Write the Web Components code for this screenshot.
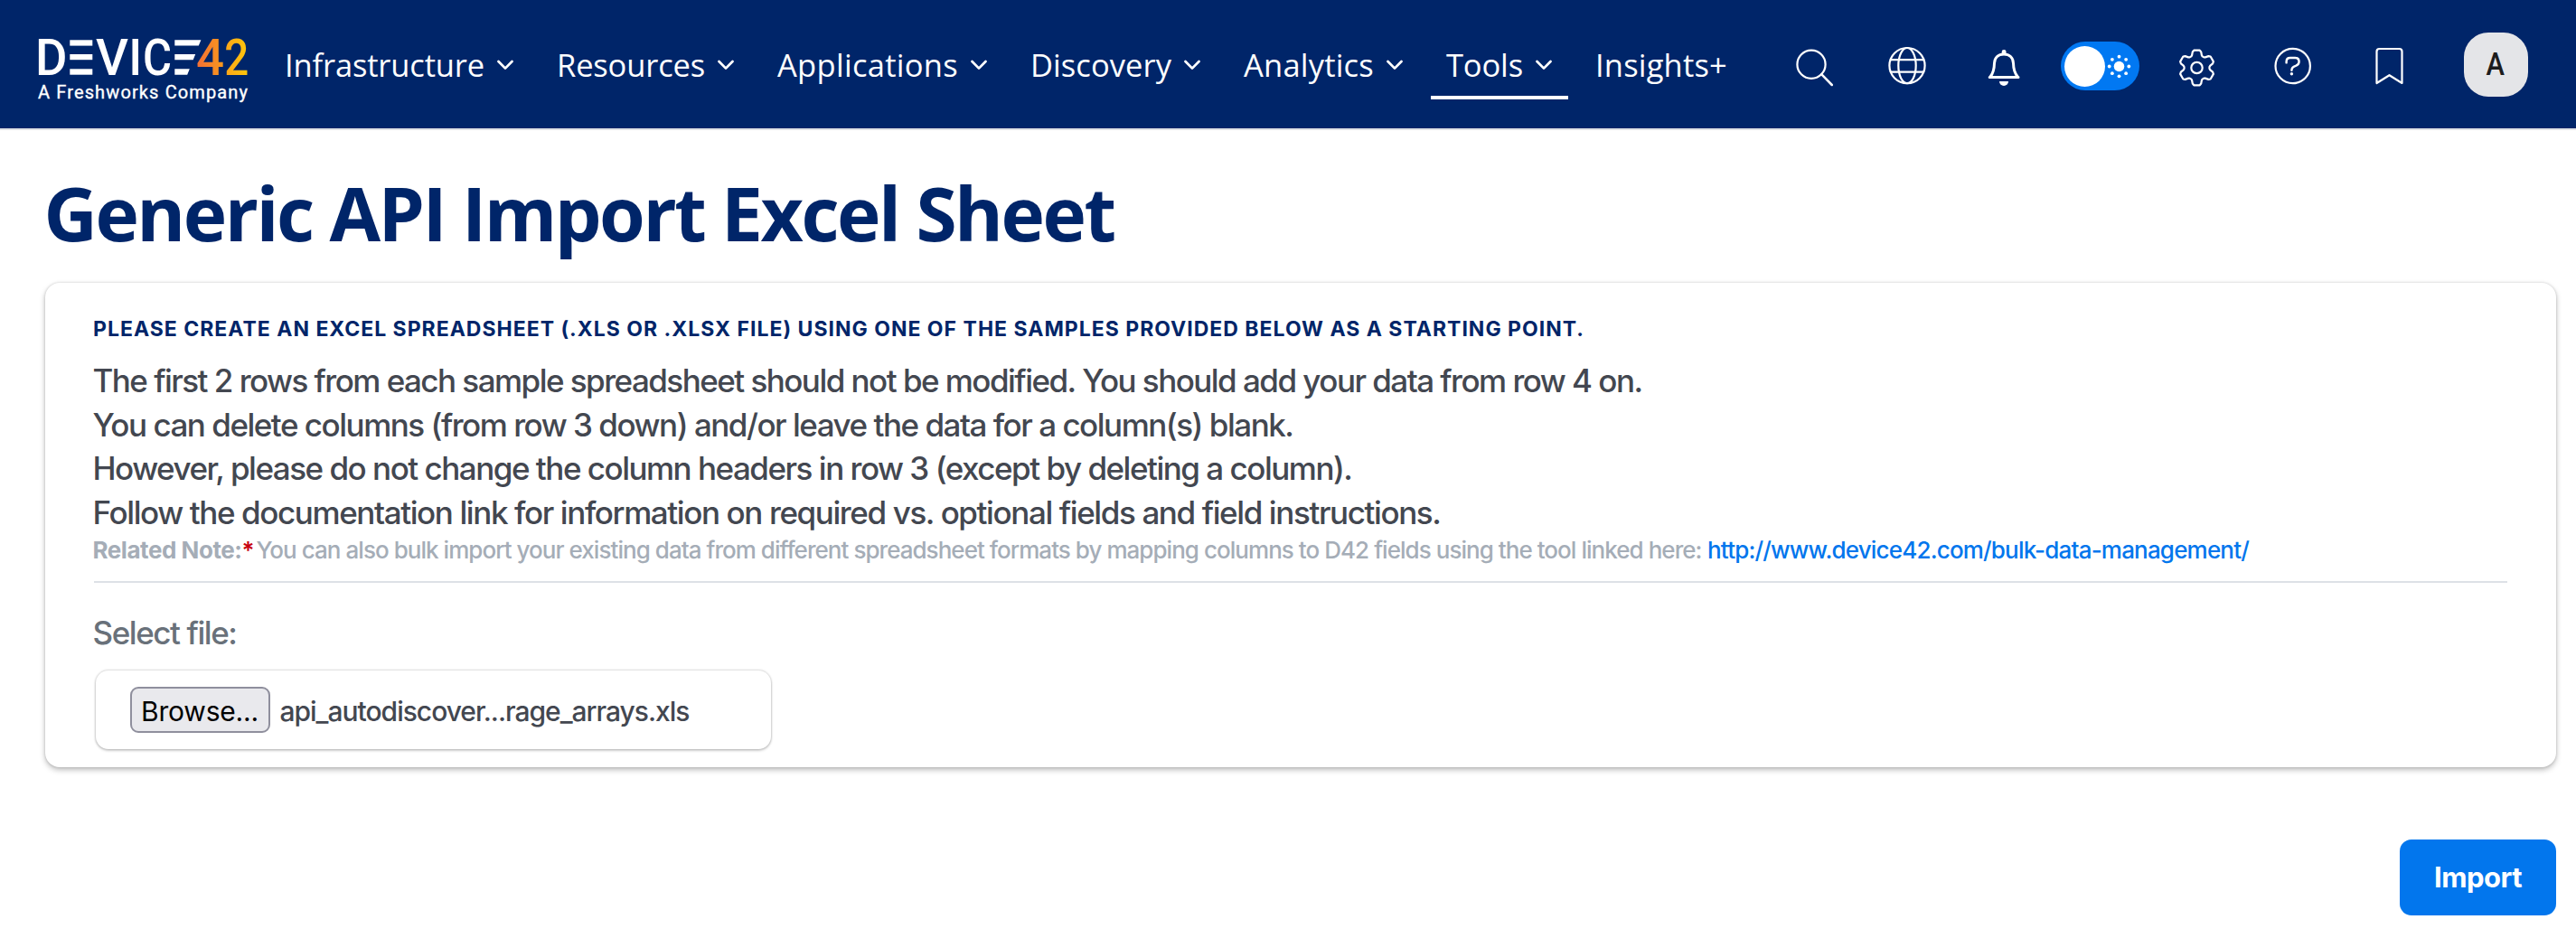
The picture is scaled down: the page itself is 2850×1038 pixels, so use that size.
<!DOCTYPE html>
<html lang="en">
<head>
<meta charset="utf-8">
<title>Generic API Import Excel Sheet</title>
<style>
  body { margin: 0; background: #fff; font-family: Inter, "Liberation Sans", sans-serif; }
</style>
</head>
<body>
<d42-page></d42-page>
<script>
const define = (name, html, setup) => customElements.define(name, class extends HTMLElement {
  connectedCallback() {
    if (this.shadowRoot) return;
    const root = this.attachShadow({ mode: 'open' });
    const t = document.createElement('template');
    t.innerHTML = html;
    root.append(t.content.cloneNode(true));
    if (setup) setup(this, root);
  }
});

/* One line of text, tracked to an exact measure given by w. */
define('fit-text', `<style>
  :host { display: block; white-space: pre; }
  span { display: inline-block; }
</style><span><slot></slot></span>`, (el, root) => {
  const w = parseFloat(el.getAttribute('w'));
  const span = root.querySelector('span');
  el.style.width = w + 'px';
  const natural = span.getBoundingClientRect().width;
  span.style.letterSpacing = ((w - natural) / el.textContent.length) + 'px';
});

define('d42-logo', `<style>
  :host { display: block; width: 234px; height: 80px; }
  svg { display: block; overflow: visible; }
  text { font-family: Roboto, sans-serif; font-weight: 500; }
  .sub { font-weight: 400; stroke: #fff; stroke-width: .35px; }
</style>
<svg width="234" height="80" viewBox="41 40 234 80">
  <defs>
    <linearGradient id="g4" gradientUnits="userSpaceOnUse" x1="218" y1="0" x2="248" y2="0"><stop offset="0" stop-color="#f36f35"/><stop offset="1" stop-color="#f99a1c"/></linearGradient>
    <linearGradient id="g2" gradientUnits="userSpaceOnUse" x1="248" y1="0" x2="274" y2="0"><stop offset="0" stop-color="#fba31a"/><stop offset="1" stop-color="#ffc60b"/></linearGradient>
  </defs>
  <g fill="#fff" font-size="55">
    <text x="39" y="83" textLength="35.5" lengthAdjust="spacingAndGlyphs">D</text>
    <text x="75.5" y="83" textLength="27" lengthAdjust="spacingAndGlyphs">E</text>
    <text x="106" y="83" textLength="36" lengthAdjust="spacingAndGlyphs">V</text>
    <text x="142.3" y="83" textLength="15" lengthAdjust="spacingAndGlyphs">I</text>
    <text x="158" y="83" textLength="32" lengthAdjust="spacingAndGlyphs">C</text>
    <text x="191.5" y="83" textLength="18" lengthAdjust="spacingAndGlyphs">E</text>
    <text x="217" y="83" textLength="31" lengthAdjust="spacingAndGlyphs" fill="url(#g4)">4</text>
    <text x="248.2" y="83" textLength="27" lengthAdjust="spacingAndGlyphs" fill="url(#g2)">2</text>
  </g>
  <g fill="#002569"><rect x="76" y="43" width="26.8" height="41"/><rect x="192" y="43" width="18" height="41"/></g>
  <g fill="#fff">
    <rect x="77.3" y="44.3" width="25" height="6.3"/><rect x="77.3" y="60" width="25" height="6.2"/><rect x="77.3" y="76.3" width="25" height="6.4"/>
    <path d="M193.3 44.3H222.4L219.8 50.6H193.3ZM193.3 60H216.2L213.7 66.2H193.3ZM193.3 76.3H209.8L207.2 82.7H193.3Z"/>
  </g>
  <text class="sub" x="42" y="109" font-size="20" fill="#fff" textLength="232">A Freshworks Company</text>
</svg>`);

define('nav-item', `<style>
  :host { display: flex; align-items: center; height: 78px; box-sizing: border-box; padding: 6px 18px 0 17px; gap: 14px; border-bottom: 4px solid transparent; }
  :host([active]) { border-color: #fff; }
  :host([plain]) svg { display: none; }
  svg { display: block; }
</style><slot></slot>
<svg width="18" height="12" viewBox="0 0 18 12" fill="none" stroke="#fff" stroke-width="2.7" stroke-linecap="round" stroke-linejoin="round"><path d="M1.5 2L9 9.6L16.5 2"/></svg>`);

const gear = (() => {
  let d = '';
  for (let k = 0; k < 6; k++)
    [[-26, 14], [-21, 15], [-15, 18.2], [-9.5, 19.6], [9.5, 19.6], [15, 18.2], [21, 15], [26, 14]].forEach(([a, r]) => {
      const t = (k * 60 + a) * Math.PI / 180;
      d += (d ? 'L' : 'M') + (23.5 + r * Math.sin(t)).toFixed(2) + ' ' + (28 - r * Math.cos(t)).toFixed(2);
    });
  return d + 'Z';
})();
const icons = {
  search: '<circle cx="20" cy="24.3" r="15.6"/><path d="M31.2 35.2L42.8 47" stroke-width="2.5"/>',
  globe: '<circle cx="24" cy="25.6" r="19.6"/><ellipse cx="24" cy="25.6" rx="9.7" ry="19.6"/><path d="M5.8 19.2H42.2M5.8 32.6H42.2"/>',
  bell: '<g stroke-width="3"><path d="M8.2 38.6H40M9 38C12.5 33.5 13.4 29 13.5 23C13.7 16.5 18 13 24 13S34.3 16.5 34.5 23C34.6 29 35.5 33.5 39.3 38"/></g><path d="M22.8 12V10.3a1.3 1.3 0 0 1 2.6 0V12Z" fill="#fff"/><path d="M19 43H29A5 5 0 0 1 19 43Z" fill="#fff" stroke="none"/>',
  gear: `<path d="${gear}"/><circle cx="23.5" cy="28" r="6.2"/>`,
  help: '<circle cx="23.7" cy="26" r="19.2"/><path d="M16.6 22.4V21.2Q16.6 17 20.8 17H26.4Q30.6 17 30.6 21.2Q30.6 24.4 26.8 25.8Q22.4 27.2 22.4 30.8" stroke-width="2.4"/><circle cx="22.4" cy="34.8" r="1.7" fill="#fff" stroke="none"/>',
  bookmark: '<path d="M9.5 45V10Q9.5 7 12.5 7H34.5Q37.5 7 37.5 10V45L23.5 36.2Z"/>'
};
define('top-icon', `<style>
  :host { display: block; width: 48px; height: 48px; flex: none; }
  svg { display: block; overflow: visible; }
</style><svg width="48" height="48" viewBox="0 0 48 48" fill="none" stroke="#fff" stroke-width="2.2" stroke-linecap="round" stroke-linejoin="round"></svg>`,
  (el, root) => { root.querySelector('svg').innerHTML = icons[el.getAttribute('name')]; });

define('theme-toggle', `<style>
  :host { display: flex; align-items: center; box-sizing: border-box; width: 87px; height: 54px; padding: 0 9px 0 4px; border-radius: 27px; background: #0178f2; justify-content: space-between; }
  i { display: block; width: 45px; height: 45px; border-radius: 50%; background: #fff; }
  svg { display: block; }
</style><i></i><svg width="27" height="27" viewBox="-13.5 -13.5 27 27" fill="#fff"></svg>`, (el, root) => {
  let s = '<circle r="5.8"/>';
  for (let k = 0; k < 8; k++) s += `<circle cx="${10.8 * Math.cos(k * Math.PI / 4)}" cy="${10.8 * Math.sin(k * Math.PI / 4)}" r="1.9"/>`;
  root.querySelector('svg').innerHTML = s;
});

define('user-avatar', `<style>
  :host { display: flex; align-items: center; justify-content: center; width: 71px; height: 71px; border-radius: 27px; background: #e4e5e8; color: #1c1c1c; font: 500 35px/71px Roboto, sans-serif; }
  span { transform: scaleX(.88); margin-right: 2px; }
</style><span><slot></slot></span>`);

define('top-bar', `<style>
  :host { display: flex; align-items: center; height: 142px; box-sizing: content-box; background: #002569; border-bottom: 2px solid #e0e2e6; color: #fff; font: 500 34.5px/48px "Open Sans", sans-serif; }
  d42-logo { margin: 18px 0 0 41px; }
  nav { display: flex; gap: 13px; margin-left: 23px; flex: 1; }
  .tools { display: flex; align-items: center; padding-right: 53px; }
</style>
<d42-logo></d42-logo>
<nav>
  <nav-item><fit-text w="221">Infrastructure</fit-text></nav-item>
  <nav-item><fit-text w="164">Resources</fit-text></nav-item>
  <nav-item><fit-text w="200">Applications</fit-text></nav-item>
  <nav-item><fit-text w="156">Discovery</fit-text></nav-item>
  <nav-item><fit-text w="144">Analytics</fit-text></nav-item>
  <nav-item active><fit-text w="85">Tools</fit-text></nav-item>
  <nav-item plain><fit-text w="146">Insights+</fit-text></nav-item>
</nav>
<div class="tools">
  <top-icon name="search"></top-icon>
  <top-icon name="globe" style="margin-left:54px"></top-icon>
  <top-icon name="bell" style="margin-left:59px"></top-icon>
  <theme-toggle style="margin:4px 0 0 39px"></theme-toggle>
  <top-icon name="gear" style="margin-left:40px"></top-icon>
  <top-icon name="help" style="margin-left:58px"></top-icon>
  <top-icon name="bookmark" style="margin-left:59px"></top-icon>
  <user-avatar style="margin-left:58px">A</user-avatar>
</div>`);

define('file-picker', `<style>
  :host { display: flex; align-items: center; box-sizing: border-box; width: 747px; height: 87px; margin-left: 1.5px; padding-left: 38px; gap: 11px; border-radius: 14px; background: #fff; box-shadow: 0 0 2px 1px rgba(0,0,0,.14), 0 2px 3px rgba(0,0,0,.16); font-size: 30px; line-height: 40px; color: #434750; }
  button { display: flex; align-items: center; justify-content: center; box-sizing: border-box; width: 155px; height: 51px; padding: 2px 0 0; border: 2px solid #8f8f9d; border-radius: 9px; background: #e9e9ed; color: #000; font: inherit; }
  fit-text.name { padding-top: 2px; font-weight: 450; }
</style>
<button><fit-text w="130">Browse...</fit-text></button><fit-text class="name" w="453">api_autodiscover...rage_arrays.xls</fit-text>`);

define('import-card', `<style>
  :host { display: block; box-sizing: border-box; width: 2778px; height: 535.5px; padding: 35.6px 54px 0; border-radius: 16px; background: #fff; box-shadow: 0 0 3px rgba(0,0,0,.16), 0 3px 6px rgba(0,0,0,.26); }
  .lead { margin: 0 0 18.4px -1px; font: 650 23px/30px Inter, sans-serif; color: #002569; }
  .line { margin-left: -1.5px; font-size: 35px; font-weight: 450; line-height: 48.6px; color: #434750; }
  .note { display: flex; align-items: baseline; margin: 1.5px 0 0 -1.5px; font-size: 26px; line-height: 32px; color: #a5adb7; font-weight: 450; }
  .note b { font-weight: 650; display: flex; }
  .star { color: #c80010; width: 12px; font-weight: 600; }
  a { color: #0276ed; text-decoration: none; margin-left: 6.5px; }
  hr { margin: 18px 0 31px; border: 0; height: 2px; background: #dde1e6; }
  .label { margin: 0 0 18.5px -1.5px; font-size: 35px; font-weight: 450; line-height: 48px; color: #69717a; }
</style>
<h2 class="lead"><fit-text w="1650">PLEASE CREATE AN EXCEL SPREADSHEET (.XLS OR .XLSX FILE) USING ONE OF THE SAMPLES PROVIDED BELOW AS A STARTING POINT.</fit-text></h2>
<fit-text class="line" w="1714">The first 2 rows from each sample spreadsheet should not be modified. You should add your data from row 4 on.</fit-text>
<fit-text class="line" w="1328">You can delete columns (from row 3 down) and/or leave the data for a column(s) blank.</fit-text>
<fit-text class="line" w="1393">However, please do not change the column headers in row 3 (except by deleting a column).</fit-text>
<fit-text class="line" w="1491">Follow the documentation link for information on required vs. optional fields and field instructions.</fit-text>
<div class="note"><b><fit-text w="165">Related Note:</fit-text></b><span class="star">*</span><fit-text style="margin-left:4px" w="1599">You can also bulk import your existing data from different spreadsheet formats by mapping columns to D42 fields using the tool linked here:</fit-text><a href="#"><fit-text w="599">http://www.device42.com/bulk-data-management/</fit-text></a></div>
<hr>
<fit-text class="label" w="159">Select file:</fit-text>
<file-picker></file-picker>`);

define('primary-button', `<style>
  :host { display: flex; }
  button { display: flex; align-items: center; justify-content: center; width: 173px; height: 84px; padding: 0; border: 0; border-radius: 13px; background: #0276ed; color: #fff; font: 650 31px/40px Inter, sans-serif; }
</style><button><slot></slot></button>`);

define('d42-page', `<style>
  :host { display: block; height: 1038px; overflow: hidden; }
  main { display: flex; flex-direction: column; padding: 41px 22px 0 50px; }
  h1 { margin: 0 0 28px -1.5px; font: 700 82px/100px "Open Sans", sans-serif; color: #002569; }
  primary-button { align-self: flex-end; margin-top: 80.5px; }
</style>
<top-bar></top-bar>
<main>
  <h1><fit-text w="1184">Generic API Import Excel Sheet</fit-text></h1>
  <import-card></import-card>
  <primary-button><fit-text w="97">Import</fit-text></primary-button>
</main>`);
</script>
</body>
</html>
